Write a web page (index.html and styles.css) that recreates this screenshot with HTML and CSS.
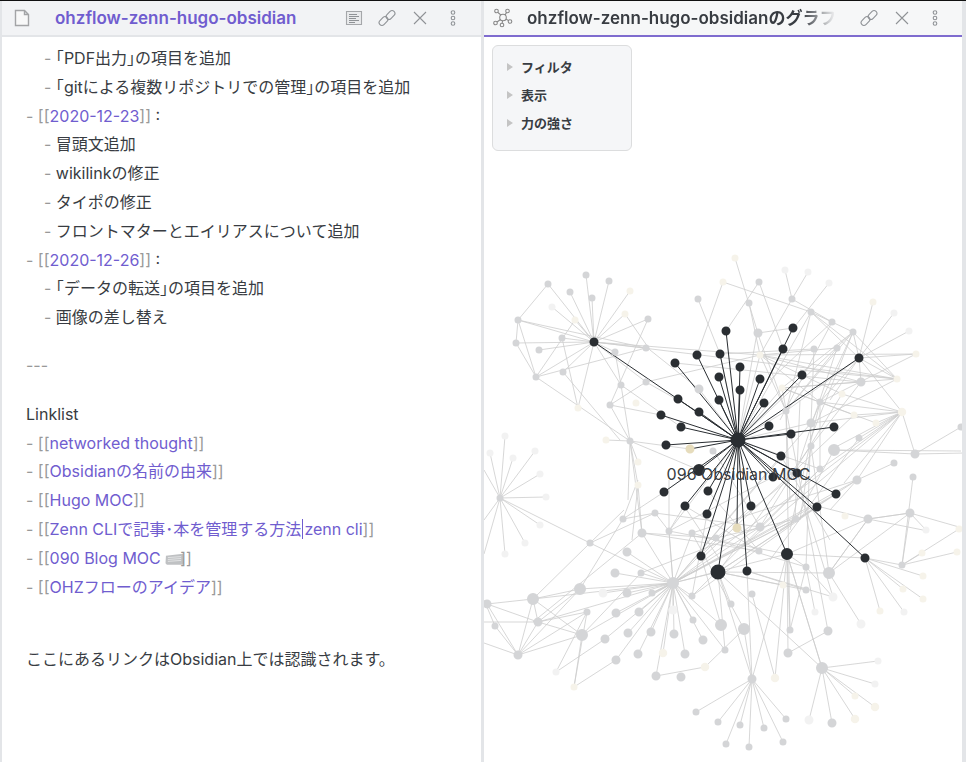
FILE: index.html
```html
<!DOCTYPE html>
<html lang="ja">
<head>
<meta charset="utf-8">
<title>ohzflow-zenn-hugo-obsidian</title>
<link rel="stylesheet" href="styles.css">
</head>
<body>
<div class="app">
  <section class="pane pane-note">
    <header class="head">
      <svg class="icon file" viewBox="0 0 16 18"><path d="M1.500 1.500h9l4 4v11h-13zM10.500 1.500v4h4"/></svg>
      <h1 class="title title-note">ohzflow-zenn-hugo-obsidian</h1>
      <div class="actions actions-note">
        <svg class="icon" viewBox="0 0 18 18"><path class="box" d="M1.500 2.500h15v13h-15z"/><path d="M4 5.500h8M4 7.500h10M4 9.500h7M4 11.500h10M4 13.500h6"/></svg>
        <svg class="icon" viewBox="0 0 18 18"><rect x="7.500" y="3.200" width="10" height="5.600" rx="2.800" transform="rotate(-45 12.500 6)"/><rect x="0.500" y="9.200" width="10" height="5.600" rx="2.800" transform="rotate(-45 5.500 12)"/></svg>
        <svg class="icon" viewBox="0 0 18 18"><path d="M3 3l12 12M15 3 3 15"/></svg>
        <svg class="icon" viewBox="0 0 18 18"><circle cx="9" cy="3.500" r="1.800"/><circle cx="9" cy="9" r="1.800"/><circle cx="9" cy="14.500" r="1.800"/></svg>
      </div>
    </header>
    <div class="note">
      <div class="line sub"><i>- </i><b>「</b>PDF出力<b>」</b>の項目を追加</div>
      <div class="line sub"><i>- </i><b>「</b>gitによる複数リポジトリでの管理<b>」</b>の項目を追加</div>
      <div class="line"><i>- [[</i><a>2020-12-23</a><i>]]</i> :</div>
      <div class="line sub"><i>- </i>冒頭文追加</div>
      <div class="line sub"><i>- </i>wikilinkの修正</div>
      <div class="line sub"><i>- </i>タイポの修正</div>
      <div class="line sub"><i>- </i>フロントマターとエイリアスについて追加</div>
      <div class="line"><i>- [[</i><a>2020-12-26</a><i>]]</i> :</div>
      <div class="line sub"><i>- </i><b>「</b>データの転送<b>」</b>の項目を追加</div>
      <div class="line sub"><i>- </i>画像の差し替え</div>
      <div class="line block"><i>---</i></div>
      <div class="line block">Linklist</div>
      <div class="line"><i>- [[</i><a>networked thought</a><i>]]</i></div>
      <div class="line"><i>- [[</i><a>Obsidianの名前の由来</a><i>]]</i></div>
      <div class="line"><i>- [[</i><a>Hugo MOC</a><i>]]</i></div>
      <div class="line"><i>- [[</i><a>Zenn CLIで記事･本を管理する方法</a><span class="bar"></span><a>zenn cli</a><i>]]</i></div>
      <div class="line"><i>- [[</i><a>090 Blog MOC</a> <svg class="kbd" viewBox="0 0 20 12"><path class="kbd-body" d="M1 2.500 19 .5 20 10.500 19 12H2L.5 10.500z"/><path class="kbd-keys" d="M3 4.500 17 3.500M3 6.500 17 5.500M3 8.500 17 7.500"/></svg><i>]]</i></div>
      <div class="line"><i>- [[</i><a>OHZフローのアイデア</a><i>]]</i></div>
      <div class="line final">ここにあるリンクはObsidian上では認識されます。</div>
    </div>
  </section>
  <section class="pane pane-graph">
    <header class="head head-graph">
      <svg class="icon graph-icon" viewBox="0 0 20 20"><circle cx="10" cy="9.500" r="3.300"/><circle cx="3.500" cy="3" r="1.800"/><circle cx="14.500" cy="3" r="1.800"/><circle cx="2.500" cy="15" r="1.800"/><circle cx="9" cy="17" r="1.800"/><circle cx="17" cy="13.500" r="1.800"/><path d="M5 4.500 8 7.200M13.500 4.600 12 7M4 14 7.500 11.500M9.500 12.800 9.200 15.200M13 11 15.500 12.600"/></svg>
      <h2 class="title title-graph">ohzflow-zenn-hugo-obsidianのグラフ</h2>
      <div class="actions actions-graph">
        <svg class="icon" viewBox="0 0 18 18"><rect x="7.500" y="3.200" width="10" height="5.600" rx="2.800" transform="rotate(-45 12.500 6)"/><rect x="0.500" y="9.200" width="10" height="5.600" rx="2.800" transform="rotate(-45 5.500 12)"/></svg>
        <svg class="icon" viewBox="0 0 18 18"><path d="M3 3l12 12M15 3 3 15"/></svg>
        <svg class="icon" viewBox="0 0 18 18"><circle cx="9" cy="3.500" r="1.800"/><circle cx="9" cy="9" r="1.800"/><circle cx="9" cy="14.500" r="1.800"/></svg>
      </div>
    </header>
    <div class="canvas">
      <svg class="graph" viewBox="484 37 478 725">
        <g class="edges">
          <path d="M594 342L548 284M594 342L586 275M594 342L609 281M594 342L570 292M594 342L592 298M594 342L518 320M594 342L516 343M594 342L539 350M594 342L536 377M594 342L563 372M594 342L562 338M594 342L648 319M594 342L646 348M594 342L615 352M594 342L621 385M594 342L630 291M594 342L625 314M594 342L575 320M594 342L552 307M594 342L578 408M594 342L646 382M594 342L760 355M594 342L897 379"/>
          <path d="M548 284L518 320L536 377L516 343L518 320L646 348M536 377L630 441L621 385L615 352M536 377L646 348M536 377L575 320M578 408L562 338M630 441L606 440M630 441L638 462M630 441L638 485L632 540M630 441L610 405L646 382L760 355M630 441L642 533M630 441L628 500M625 314L650 350L699 389M648 319L610 405M563 372L620 440"/>
          <path d="M723 282L697 355M723 282L811 312M698 299L720 354M759 282L726 331M759 282L783 349M749 303L760 355M735 258L760 340L786 411M792 299L760 355M785 270L792 299M808 272L792 299M829 283L792 330M792 299L832 322M811 312L853 332L859 358M811 312L859 358M811 312L897 379M853 332L897 379M832 322L770 380M853 332L782 388M758 333L793 328M814 349L720 354M837 348L786 411M837 348L760 355M861 382L760 355M897 379L760 355M897 379L800 370M916 354L760 355"/>
          <path d="M786 411L760 355M786 411L811 312M786 411L853 332M811 423L853 332M811 423L814 349M820 402L760 355M820 402L916 354M842 394L760 355M854 415L782 388M876 423L782 388M859 358L786 411M859 358L820 402M861 382L782 388M861 382L811 446M811 423L897 379M897 379L782 388M786 411L790 500M800 400L795 520M820 402L820 469M811 446L800 520M832 322L780 420M837 348L800 460M853 332L810 440"/>
          <path d="M859 358L873 302M859 358L894 313M859 358L909 331M859 358L916 354M859 358L897 379M859 358L902 412M859 358L861 382M859 358L830 400M902 412L854 415M902 412L876 423M902 412L842 394M902 412L811 423M902 412L820 402M902 412L857 480M902 412L844 483M902 412L859 438M902 412L915 454M902 412L820 469M902 412L786 500M902 412L750 540M902 412L830 450M915 454L961 427M915 454L966 453M834 450L961 451M834 450L915 454M894 463L857 480M913 477L902 565M857 480L830 510M857 480L780 530"/>
          <path d="M786 411L790 630M811 423L806 567M811 446L829 573M820 469L760 527M782 388L828 631M820 402L790 530M781 456L830 540M834 450L796 519M859 438L770 560M842 394L760 527M854 415L700 560"/>
          <path d="M910 513L966 529M910 513L926 530M910 513L902 565M910 513L868 519L829 573M829 573L910 513M868 519L813 505M868 519L923 530M902 565L957 552M902 565L959 529M902 565L922 553M865 558L880 611M865 558L904 612M865 558L923 599M865 558L903 589M865 558L923 576M865 558L787 554M865 558L902 565M787 554L790 630M787 554L822 668M787 554L868 519"/>
          <path d="M673 583L652 593M673 583L627 593M673 583L641 573M673 583L615 573M673 583L627 552M673 583L616 613M673 583L639 612M673 583L693 620M673 583L628 633M673 583L651 632M673 583L674 634M673 583L703 640M673 583L725 650M673 583L685 654M673 583L638 654M673 583L616 660M673 583L656 676M673 583L663 653M673 583L692 596M673 583L605 639M673 583L603 593M673 583L673 610M673 583L642 533M673 583L669 531M673 583L692 533M673 583L716 538M673 583L718 572M673 583L787 554M673 583L760 527M673 583L796 519M673 583L857 480M673 583L811 423M673 583L786 500"/>
          <path d="M642 533L716 538M642 533L759 551M655 513L760 527M669 531L787 554M692 533L806 567M716 538L796 519M685 506L759 551M707 514L692 596M751 506L701 556M817 507L718 572M817 507L692 596M796 519L652 593M760 527L641 573M781 456L673 583M820 469L692 596M836 494L718 572M797 473L716 538M773 477L669 531M836 494L673 583M857 480L692 533M811 446L718 572M708 491L759 551"/>
          <path d="M500 498L505 436M500 498L490 453M500 498L513 458M500 498L535 451M500 498L540 474M500 498L546 497M500 498L540 525M500 498L525 543M500 498L505 554M500 498L484 554M500 498L484 470M500 498L484 520M500 498L590 543L533 599M590 543L673 583M590 543L655 513M590 543L624 510M623 519L580 589M623 519L638 480M623 519L655 513M642 533L533 622M655 513L669 531M638 485L642 533M669 480L669 531M684 506L669 531L673 583"/>
          <path d="M533 599L487 604M533 599L518 655M533 599L538 622M533 599L582 635M533 599L580 589M533 599L673 583M580 589L673 583M580 589L518 655M580 589L538 622M487 604L518 655M495 626L518 655M495 626L484 600M487 604L538 622M484 622L538 622M484 643L518 655M538 622L518 655M538 622L582 635M518 655L587 612M538 622L587 612L556 672M538 622L673 583M518 655L582 635L673 583M587 612L574 687M574 687L582 635M574 687L616 660M556 672L605 639M582 635L641 573"/>
          <path d="M718 572L752 679M718 572L822 668M718 572L725 650M718 572L806 590M718 572L731 604M718 572L783 585M721 625L673 583M744 629L692 533M744 629L705 667L656 676M744 629L752 679M718 572L829 573L868 519M747 571L806 590M747 571L752 679M747 571L833 597M787 554L752 679M787 554L788 653M787 554L806 567M806 567L790 630M788 653L828 631M806 567L815 612M806 567L833 597M829 573L861 624M787 554L775 678M752 594L775 678M701 556L721 625M805 505L833 597M822 668L787 554"/>
          <path d="M752 679L696 712M752 679L718 722M752 679L740 725M752 679L764 728M752 679L786 719M752 679L726 744M752 679L749 747M752 679L783 742M822 668L878 661M822 668L875 684M822 668L875 707M822 668L855 696M822 668L855 719M822 668L832 723M822 668L809 720M868 519L910 513"/>
          <path d="M738 440L720 354M738 440L760 355M738 440L811 312M738 440L853 332M675 363L860 382M699 412L646 382M630 441L690 449M610 405L661 415M621 385L681 427M714 451L760 527M630 441L699 470M684 506L720 560M664 492L623 519M738 440L669 531M738 440L820 469M738 440L811 423M738 440L786 411M738 440L757 333M738 440L699 389M738 440L782 388"/>
        </g>
        <g class="edges-dark">
          <path d="M738 440L594 342M738 440L675 363M738 440L697 355M738 440L720 354M738 440L726 331M738 440L740 367M738 440L719 377M738 440L740 390M738 440L719 400M738 440L760 379M738 440L783 349M738 440L793 328M738 440L802 375M738 440L859 358M738 440L764 403M738 440L769 426M738 440L678 399M738 440L699 412M738 440L661 415M738 440L681 427M738 440L666 445M738 440L690 449"/>
          <path d="M738 440L834 427M738 440L791 434M738 440L781 456M738 440L699 470M738 440L773 477M738 440L797 473M738 440L836 494M738 440L664 492M738 440L708 491M738 440L685 506M738 440L707 514M738 440L751 506M738 440L817 507M738 440L701 556M738 440L718 572M738 440L747 571M738 440L787 554M738 440L865 558M738 440L737 528"/>
        </g>
        <path class="node n-pale" stroke-width="7" d="M552 307h0M505 436h0M490 453h0M513 458h0M535 451h0M540 474h0M546 497h0M540 525h0M525 543h0M505 554h0M785 270h0M808 272h0M829 283h0M894 313h0M909 331h0M926 530h0M904 612h0M815 612h0M875 684h0M878 661h0M556 672h0"/>
        <path class="node n-pale" stroke-width="9" d="M603 593h0M673 610h0M833 597h0M861 624h0M809 720h0"/>
        <path class="node n-cream" stroke-width="7" d="M735 258h0M723 282h0M873 302h0M916 354h0M897 379h0M854 415h0M876 423h0M842 394h0M782 388h0M760 355h0M630 291h0M625 314h0M575 320h0M578 408h0M636 403h0M606 440h0M638 462h0M638 485h0M845 516h0M959 529h0M957 552h0M922 553h0M923 576h0M903 589h0M923 599h0M880 611h0M783 585h0M574 687h0M855 696h0"/>
        <path class="node n-cream" stroke-width="8.500" d="M902 412h0M663 653h0M705 667h0M775 678h0M855 719h0M875 707h0"/>
        <path class="node n-grey" stroke-width="7" d="M548 284h0M586 275h0M609 281h0M570 292h0M592 298h0M518 320h0M516 343h0M539 350h0M536 377h0M563 372h0M562 338h0M648 319h0M646 348h0M615 352h0M621 385h0M646 382h0M610 405h0M630 441h0M698 299h0M759 282h0M749 303h0M792 299h0M811 312h0M832 322h0M853 332h0M814 349h0M837 348h0M820 402h0M786 411h0M859 438h0M811 446h0M894 463h0M913 477h0M820 469h0M713 451h0M961 427h0M500 498h0M655 513h0M623 519h0M669 531h0M692 533h0M716 538h0M759 551h0M796 519h0M902 565h0M806 567h0M806 590h0M752 594h0M731 604h0M692 596h0M652 593h0M641 573h0M590 543h0M587 612h0M693 620h0M725 650h0M790 630h0M696 712h0M718 722h0M740 725h0M764 728h0M786 719h0M726 744h0M749 747h0M783 742h0M495 626h0"/>
        <path class="node n-grey" stroke-width="9" d="M758 333h0M699 389h0M811 423h0M861 382h0M915 454h0M857 480h0M642 533h0M760 527h0M868 519h0M910 513h0M627 593h0M615 573h0M627 552h0M487 604h0M538 622h0M616 613h0M639 612h0M518 655h0M605 639h0M628 633h0M651 632h0M674 634h0M703 640h0M685 654h0M638 654h0M616 660h0M656 676h0M681 677h0M788 653h0M828 631h0M752 679h0M832 723h0"/>
        <path class="node n-grey" stroke-width="12" d="M834 450h0M673 583h0M829 573h0M580 589h0M533 599h0M582 635h0M721 625h0M744 629h0M822 668h0"/>
        <path class="node n-tan" stroke-width="9" d="M690 449h0M737 528h0"/>
        <path class="node n-dark" stroke-width="9" d="M594 342h0M675 363h0M697 355h0M720 354h0M726 331h0M740 367h0M719 377h0M740 390h0M719 400h0M760 379h0M783 349h0M793 328h0M802 375h0M859 358h0M764 403h0M769 426h0M678 399h0M699 412h0M661 415h0M681 427h0M666 445h0M834 427h0M791 434h0M781 456h0M773 477h0M797 473h0M836 494h0M664 492h0M708 491h0M685 506h0M707 514h0M751 506h0M817 507h0M701 556h0M747 571h0M865 558h0"/>
        <path class="node n-dark" stroke-width="12" d="M699 470h0M787 554h0"/>
        <path class="node n-dark" stroke-width="15" d="M738 440h0M718 572h0"/>
        <text class="graph-label" x="738.500" y="480">096 Obsidian MOC</text>
      </svg>
      <div class="controls">
        <div class="control">フィルタ</div>
        <div class="control">表示</div>
        <div class="control">力の強さ</div>
      </div>
    </div>
  </section>
</div>
</body>
</html>
```
FILE: styles.css
```css
* { box-sizing: border-box; }
html, body { margin: 0; height: 100%; overflow: hidden; background: #fff; }
body {
  font-family: Inter, "Noto Sans CJK JP", "Noto Sans", sans-serif;
  color: #383c42;
  border-top: 1px solid #111;
}
.app { display: flex; height: 761px; }
.pane { position: relative; display: flex; flex-direction: column; overflow: hidden; min-width: 0; }
.pane-note { width: 484px; border-left: 2px solid #e3e5e8; border-right: 3px solid #e3e5e8; }
.pane-graph { width: 482px; border-right: 4px solid #e3e5e8; }

.head {
  flex: none; height: 36px; display: flex; align-items: center;
  background: #f2f3f5; border-bottom: 2px solid #e3e5e8;
}
.head-graph { background: #f6f7f8; border-bottom: 2px solid #7f6ccf; }
.title { margin: 0; font-size: 17px; line-height: 20px; font-weight: 600; white-space: nowrap; overflow: hidden; }
.title-note { color: #705dcf; margin-left: 25px; width: 272px; }
.title-graph {
  color: #383c42; margin-left: 14px; width: 307px;
  -webkit-mask-image: linear-gradient(to right, #000 275px, transparent 309px);
  mask-image: linear-gradient(to right, #000 275px, transparent 309px);
}

.icon { width: 18px; height: 18px; flex: none; fill: none; stroke: #8f9296; stroke-width: 1.100; }
.file { width: 16px; height: 18px; margin-left: 12px; stroke: #a3a4a6; stroke-width: 1.400; fill: #f8f8f8; }
.graph-icon { width: 20px; height: 20px; margin-left: 9px; stroke: #888; }
.actions { display: flex; align-items: center; gap: 15px; }
.actions-note { margin-left: 18px; }
.actions-graph { margin-left: 26px; }
.box { stroke: #a5a7aa; fill: #e9eaec; }

.note { flex: 1; overflow: hidden; padding: 7px 24px 0; font-size: 16px; line-height: 28.800px; }
.line { white-space: nowrap; }
.sub { padding-left: 18px; }
.line i { font-style: normal; color: #999; }
.line b { font-weight: 400; font-feature-settings: "halt"; }
.line a { color: #705dcf; }
.block { margin-top: 19.500px; }
.final { margin-top: 43.500px; }
.bar { display: inline-block; width: 1px; height: 20px; margin: 0 1px; vertical-align: -4px; background: #705dcf; }
.kbd { width: 19px; height: 12px; vertical-align: -1px; margin-right: -4px; }
.kbd-body { fill: #bfc1c3; }
.kbd-keys { fill: none; stroke: #e4e5e6; stroke-width: 1; }

.canvas { position: relative; flex: 1; overflow: hidden; }
.graph { display: block; width: 478px; height: 725px; }
.edges path { fill: none; stroke: #cdcdcd; stroke-width: .8; }
.edges-dark path { fill: none; stroke: #2a2e32; stroke-width: 1; }
.node { fill: none; stroke-linecap: round; }
.n-pale { stroke: #f2f2f2; }
.n-cream { stroke: #f6f3ea; }
.n-grey { stroke: #d4d5d7; }
.n-tan { stroke: #e6dcbc; }
.n-dark { stroke: #2a2e32; }
.graph-label { font-size: 16px; fill: #383c42; text-anchor: middle; }

.controls {
  position: absolute; left: 8px; top: 8px; width: 140px; height: 106px;
  padding: 7px 0 0 28px;
  background: #f5f6f8; border: 1px solid #dcddde; border-radius: 6px;
}
.control { position: relative; height: 28px; font-size: 13px; line-height: 28px; font-weight: 600; }
.control::before {
  content: ""; position: absolute; left: -14px; top: 10px;
  border-left: 6px solid #c4c4c4; border-top: 4px solid transparent; border-bottom: 4px solid transparent;
}
```
